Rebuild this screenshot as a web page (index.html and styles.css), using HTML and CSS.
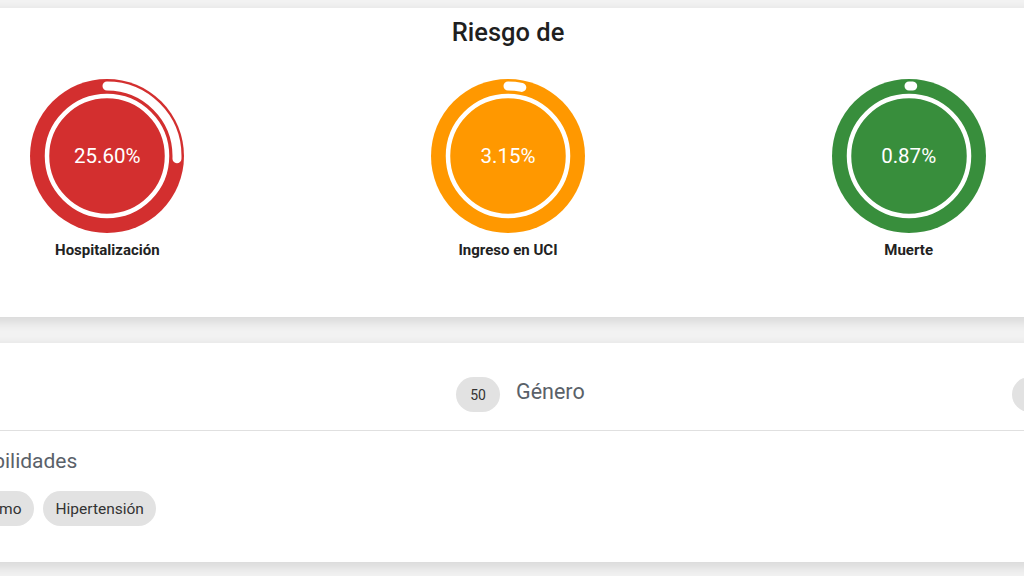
FILE: index.html
```html
<!DOCTYPE html>
<html lang="es">
<head>
    <meta charset="UTF-8">
    <meta name="viewport" content="width=device-width, initial-scale=1.0">
    <title>Riesgo</title>
    <link rel="stylesheet" href="styles.css">
</head>
<body>
    <div class="page">
        <section class="card risk-card">
            <h2 class="card-title">Riesgo de</h2>
            <div class="gauges">
                <div class="gauge">
                    <div class="dial red">
                        <svg viewBox="0 0 154 154" width="154" height="154">
                            <circle class="dial-bg" cx="77" cy="77" r="77"></circle>
                            <circle class="dial-ring" cx="77" cy="77" r="60"></circle>
                            <circle class="dial-arc" cx="77" cy="77" r="70" stroke-dasharray="112.6 440" transform="rotate(-90 77 77)"></circle>
                        </svg>
                        <span class="dial-value">25.60%</span>
                    </div>
                    <div class="gauge-label">Hospitalización</div>
                </div>
                <div class="gauge">
                    <div class="dial orange">
                        <svg viewBox="0 0 154 154" width="154" height="154">
                            <circle class="dial-bg" cx="77" cy="77" r="77"></circle>
                            <circle class="dial-ring" cx="77" cy="77" r="60"></circle>
                            <circle class="dial-arc" cx="77" cy="77" r="70" stroke-dasharray="13.9 440" transform="rotate(-90 77 77)"></circle>
                        </svg>
                        <span class="dial-value">3.15%</span>
                    </div>
                    <div class="gauge-label">Ingreso en UCI</div>
                </div>
                <div class="gauge">
                    <div class="dial green">
                        <svg viewBox="0 0 154 154" width="154" height="154">
                            <circle class="dial-bg" cx="77" cy="77" r="77"></circle>
                            <circle class="dial-ring" cx="77" cy="77" r="60"></circle>
                            <circle class="dial-arc" cx="77" cy="77" r="70" stroke-dasharray="3.8 440" transform="rotate(-90 77 77)"></circle>
                        </svg>
                        <span class="dial-value">0.87%</span>
                    </div>
                    <div class="gauge-label">Muerte</div>
                </div>
            </div>
        </section>

        <section class="card patient-card">
            <div class="patient-row">
                <div class="field">
                    <span class="field-label">Edad</span>
                    <span class="chip chip-round">50</span>
                </div>
                <div class="field">
                    <span class="field-label">Género</span>
                    <span class="chip chip-value">Hombre</span>
                </div>
            </div>
            <div class="patient-section">
                <h3 class="field-label">Comorbilidades</h3>
                <div class="chips">
                    <span class="chip">Tabaquismo</span>
                    <span class="chip">Hipertensión</span>
                </div>
            </div>
        </section>
    </div>
</body>
</html>
```

FILE: styles.css
```css
html, body {
    margin: 0;
    padding: 0;
}
body {
    background: #f4f4f4;
    font-family: Roboto, "Liberation Sans", Arial, sans-serif;
    color: #212121;
    overflow: hidden;
    height: 576px;
}
.page {
    width: 1202px;
    margin-left: -93px;
    padding-top: 8px;
}
.card {
    background: #fff;
    box-shadow: 0 4px 14px rgba(0, 0, 0, 0.14);
}
.risk-card {
    height: 309px;
    padding-top: 1px;
    box-sizing: border-box;
}
.card-title {
    margin: 8px 0 0;
    text-align: center;
    font-size: 25.5px;
    font-weight: 500;
    line-height: 30px;
    color: #1f1f1f;
}
.gauges {
    display: grid;
    grid-template-columns: 1fr 1fr 1fr;
    margin-top: 32px;
}
.gauge {
    display: flex;
    flex-direction: column;
    align-items: center;
}
.dial {
    position: relative;
    width: 154px;
    height: 154px;
}
.dial svg {
    display: block;
}
.dial-ring {
    fill: none;
    stroke: #fff;
    stroke-width: 4.5;
}
.dial-arc {
    fill: none;
    stroke: #fff;
    stroke-width: 9;
    stroke-linecap: round;
}
.red .dial-bg { fill: #d32f2f; }
.orange .dial-bg { fill: #ff9800; }
.green .dial-bg { fill: #388e3c; }
.dial-value {
    position: absolute;
    inset: 0;
    display: flex;
    align-items: center;
    justify-content: center;
    color: #fff;
    font-size: 20.5px;
}
.gauge-label {
    margin-top: 8px;
    font-size: 15px;
    font-weight: 700;
    color: #222;
}
.patient-card {
    margin-top: 26px;
    height: 219px;
}
.patient-row {
    display: grid;
    grid-template-columns: 569px 1fr;
    gap: 16px;
    padding: 16px 16px 0 24px;
    height: 88px;
    border-bottom: 1px solid #e0e0e0;
    box-sizing: border-box;
    align-items: center;
}
.field {
    display: flex;
    justify-content: space-between;
    align-items: center;
}
.field-label {
    margin: -6px 0 0;
    font-size: 21.5px;
    font-weight: 400;
    color: #5a6169;
}
.chip {
    display: inline-flex;
    align-items: center;
    height: 35px;
    padding: 0 12px 0 13px;
    border-radius: 18px;
    background: #e2e2e2;
    font-size: 15.5px;
    color: #333;
}
.chip-round {
    width: 44px;
    padding: 0;
    justify-content: center;
    font-size: 14px;
}
.chip-value {
    padding: 0 13px 0 14px;
    font-size: 15px;
}
.patient-section {
    padding: 18px 23px 0;
}
.patient-section .field-label {
    margin: 0;
    font-size: 21px;
    line-height: 24px;
}
.chips {
    display: flex;
    gap: 9px;
    margin-top: 18px;
    margin-left: -7px;
}
```
